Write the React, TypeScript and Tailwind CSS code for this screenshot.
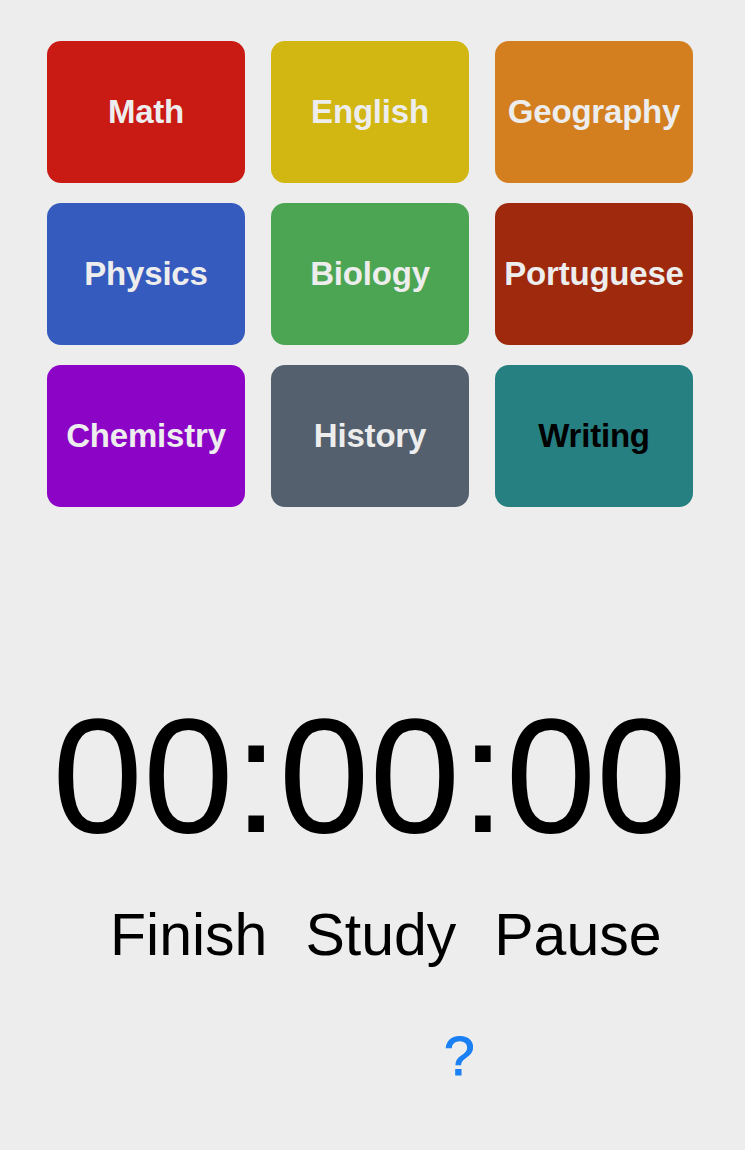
const subjects = [
  { name: 'Math', color: 'bg-[#ca1a14]', text: 'text-[#ededed]' },
  { name: 'English', color: 'bg-[#d2b611]', text: 'text-[#ededed]' },
  { name: 'Geography', color: 'bg-[#d47f1f]', text: 'text-[#ededed]' },
  { name: 'Physics', color: 'bg-[#365bbf]', text: 'text-[#ededed]' },
  { name: 'Biology', color: 'bg-[#4ca552]', text: 'text-[#ededed]' },
  { name: 'Portuguese', color: 'bg-[#9e290c]', text: 'text-[#ededed]' },
  { name: 'Chemistry', color: 'bg-[#8c04c6]', text: 'text-[#ededed]' },
  { name: 'History', color: 'bg-[#54606d]', text: 'text-[#ededed]' },
  { name: 'Writing', color: 'bg-[#267f81]', text: 'text-black' },
]

export default function App() {
  return (
    <div className="min-h-[1150px] bg-[#ededed] font-['Liberation_Sans',Arial,sans-serif]">
      <div className="grid grid-cols-[198px_198px_198px] gap-x-[26px] gap-y-[20px] pl-[47px] pt-[41px]">
        {subjects.map((s) => (
          <button
            key={s.name}
            className={`h-[142px] rounded-[14px] ${s.color} ${s.text} flex items-center justify-center text-[33px] font-bold tracking-[-0.2px]`}
          >
            {s.name}
          </button>
        ))}
      </div>

      {/* timer */}
      <div className="mt-[187px] pr-[6px] text-center text-[163px] leading-none text-black">00:00:00</div>

      <div className="mt-[49px] flex gap-[38px] pl-[110px] text-[59px] leading-none text-black">
        <button>Finish</button>
        <button>Study</button>
        <button>Pause</button>
      </div>

      <div className="mt-[64px] pl-[444px] text-[55px] leading-none text-[#1a80f4]">
        <button className="[-webkit-text-stroke:1px_#1a80f4]">?</button>
      </div>
    </div>
  )
}
